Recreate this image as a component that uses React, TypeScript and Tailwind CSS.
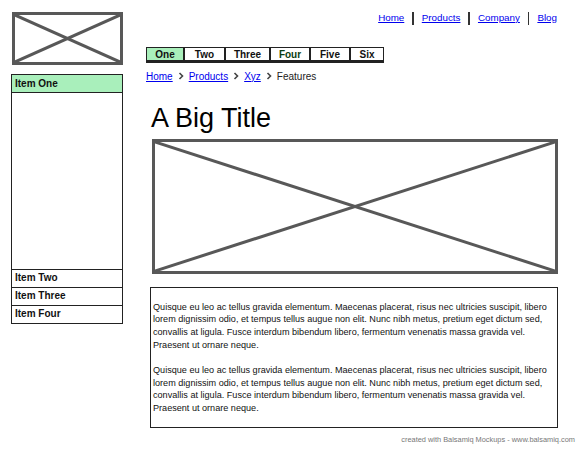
import React from 'react';

const tabs = ['One', 'Two', 'Three', 'Four', 'Five', 'Six'];
const tabWidths = ['w-[38px]', 'w-[41px]', 'w-[45px]', 'w-[40px]', 'w-[40px]', 'w-[34px]'];

const lorem =
  'Quisque eu leo ac tellus gravida elementum. Maecenas placerat, risus nec ultricies suscipit, libero lorem dignissim odio, et tempus tellus augue non elit. Nunc nibh metus, pretium eget dictum sed, convallis at ligula. Fusce interdum bibendum libero, fermentum venenatis massa gravida vel. Praesent ut ornare neque.';

// placeholder box with a cross, like a sketched image
function ImageBox({ className }: { className: string }) {
  return (
    <div className={`relative border-[3px] border-[#585858] ${className}`}>
      <svg className="absolute inset-0 w-full h-full" preserveAspectRatio="none" viewBox="0 0 100 100">
        <line x1="0" y1="0" x2="100" y2="100" stroke="#585858" strokeWidth="3" vectorEffect="non-scaling-stroke" />
        <line x1="100" y1="0" x2="0" y2="100" stroke="#585858" strokeWidth="3" vectorEffect="non-scaling-stroke" />
      </svg>
    </div>
  );
}

function Chevron() {
  return (
    <svg width="6" height="8" viewBox="0 0 6 8" className="mx-[5px]">
      <path d="M1.5 1 L4.5 4 L1.5 7" fill="none" stroke="#444" strokeWidth="1.6" />
    </svg>
  );
}

export default function App() {
  return (
    <div className="w-[580px] h-[450px] bg-white flex flex-col text-[#111]" style={{ fontFamily: '"Liberation Sans", Arial, sans-serif' }}>
      <div className="flex flex-1">
        {/* left column */}
        <div className="w-[123px] pl-[11px] pt-[12px] flex flex-col">
          <ImageBox className="ml-[1px] w-[111px] h-[53px]" />
          <div className="mt-[9px] h-[250px] border-[1.5px] border-[#222] flex flex-col">
            <div className="h-[18px] bg-[#a9efbb] border-b-[1.5px] border-[#222] pl-[3px] text-[10px] font-bold leading-[17px]">Item One</div>
            <div className="flex-1" />
            {['Item Two', 'Item Three', 'Item Four'].map((t) => (
              <div key={t} className="h-[18px] border-t-[1.5px] border-[#222] pl-[3px] text-[10px] font-bold leading-[16px]">
                {t}
              </div>
            ))}
          </div>
        </div>

        {/* right column */}
        <div className="ml-[23px] w-[412px] flex flex-col">
          <div className="flex justify-end items-center h-[18px] mt-[9px] text-[9.8px]">
            <a className="text-[#0000ee] underline">Home</a>
            <span className="mx-[8px] w-[1.5px] h-[13px] bg-[#333]" />
            <a className="text-[#0000ee] underline">Products</a>
            <span className="mx-[8px] w-[1.5px] h-[13px] bg-[#333]" />
            <a className="text-[#0000ee] underline">Company</a>
            <span className="mx-[8px] w-[1.5px] h-[13px] bg-[#333]" />
            <a className="text-[#0000ee] underline mr-[1px]">Blog</a>
          </div>

          <div className="flex mt-[20px]">
            {tabs.map((t, i) => (
              <div
                key={t}
                className={`${tabWidths[i]} h-[16px] border-[1.5px] border-b-[3px] border-[#222] flex items-center justify-center text-[10px] font-bold ${i === 0 ? 'bg-[#a9efbb]' : 'bg-white'} ${i === 3 ? 'text-[#0b3d12]' : ''}`}
              >
                {t}
              </div>
            ))}
          </div>

          <div className="flex items-center mt-[7px] h-[12px] text-[10px]">
            <a className="text-[#0000ee] underline">Home</a>
            <Chevron />
            <a className="text-[#0000ee] underline">Products</a>
            <Chevron />
            <a className="text-[#0000ee] underline">Xyz</a>
            <Chevron />
            <span className="text-[#222]">Features</span>
          </div>

          <h1 className="mt-[21px] ml-[5px] text-[27px] leading-[30px] text-black">A Big Title</h1>

          <ImageBox className="mt-[6px] ml-[6px] w-[406px] h-[135px]" />

          <div className="mt-[13px] ml-[4px] w-[408px] h-[141px] border-[1.5px] border-[#222] pl-[2px] pr-[4px] pt-[12.5px] text-[9.1px] leading-[12.7px] text-[#111]">
            <p>{lorem}</p>
            <p className="mt-[12.7px]">{lorem}</p>
          </div>
        </div>
      </div>
      <div className="h-[22px] pr-[5px] pt-[1px] flex justify-end items-center text-[7.4px] text-[#777]">
        created with Balsamiq Mockups - www.balsamiq.com
      </div>
    </div>
  );
}
